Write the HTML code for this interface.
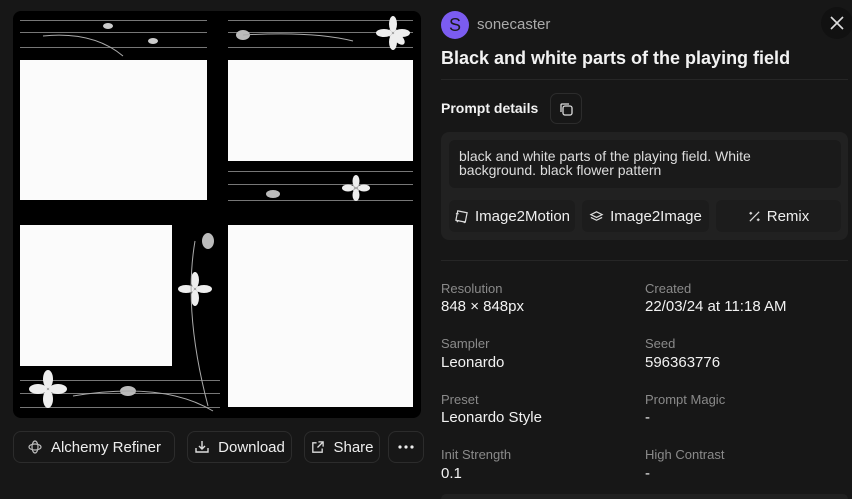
<!DOCTYPE html>
<html><head><meta charset="utf-8">
<style>
*{box-sizing:border-box;margin:0;padding:0}
html{width:852px;height:499px;overflow:hidden}
body{width:852px;height:499px;overflow:hidden;background:#171717;font-family:"Liberation Sans",sans-serif;color:#f2f2f2;position:relative}
.abs{position:absolute}
.img{left:13px;top:11px;width:408px;height:407px;background:#000;border-radius:8px;overflow:hidden}
.w{position:absolute;background:#fbfbfb}
.ln{position:absolute;height:1px;background:#777}
.btn{position:absolute;top:431px;height:32px;border:1px solid #2c2c2c;border-radius:8px;display:flex;align-items:center;justify-content:center;gap:8px;font-size:15px;color:#eee}
.lab{font-size:13px;color:#8a8a8a;position:absolute}
.val{font-size:15px;color:#f2f2f2;position:absolute}
.ab{position:absolute;top:200px;height:32px;background:#1c1c1c;border-radius:6px;display:flex;align-items:center;justify-content:center;gap:6px;font-size:15px;color:#eee}
</style></head><body>
<div class="abs img">
  <div class="ln" style="left:7px;top:9px;width:187px"></div>
  <div class="ln" style="left:7px;top:21px;width:187px"></div>
  <div class="ln" style="left:7px;top:36px;width:187px"></div>
  <div class="ln" style="left:215px;top:9px;width:185px"></div>
  <div class="ln" style="left:215px;top:21px;width:185px"></div>
  <div class="ln" style="left:215px;top:36px;width:185px"></div>
  <div class="ln" style="left:215px;top:160px;width:185px"></div>
  <div class="ln" style="left:215px;top:173px;width:185px"></div>
  <div class="ln" style="left:215px;top:189px;width:185px"></div>
  <div class="ln" style="left:7px;top:369px;width:200px"></div>
  <div class="ln" style="left:7px;top:382px;width:200px"></div>
  <div class="ln" style="left:7px;top:396px;width:200px"></div>
  <div class="w" style="left:7px;top:49px;width:187px;height:140px"></div>
  <div class="w" style="left:215px;top:49px;width:185px;height:101px"></div>
  <div class="w" style="left:7px;top:214px;width:152px;height:141px"></div>
  <div class="w" style="left:215px;top:214px;width:185px;height:182px"></div>
  <svg class="abs" style="left:0;top:0" width="408" height="407">
    <g fill="#eee">
      <g transform="translate(380,22)"><circle r="5" fill="#aaa"/><ellipse cx="0" cy="-9" rx="4" ry="8"/><ellipse cx="0" cy="9" rx="4" ry="8"/><ellipse cx="-9" cy="0" rx="8" ry="4"/><ellipse cx="9" cy="0" rx="8" ry="4"/><ellipse cx="6" cy="6" rx="4" ry="7" transform="rotate(-45 6 6)"/></g>
      <g transform="translate(343,177)"><circle r="4" fill="#aaa"/><ellipse cy="-7" rx="3.5" ry="6"/><ellipse cy="7" rx="3.5" ry="6"/><ellipse cx="-8" rx="6" ry="3.5"/><ellipse cx="8" rx="6" ry="3.5"/></g>
      <g transform="translate(182,278)"><circle r="4" fill="#aaa"/><ellipse cy="-9" rx="4" ry="8"/><ellipse cy="9" rx="4" ry="8"/><ellipse cx="-9" rx="8" ry="4"/><ellipse cx="9" rx="8" ry="4"/></g>
      <g transform="translate(35,378)"><circle r="4" fill="#aaa"/><ellipse cy="-10" rx="5" ry="9"/><ellipse cy="10" rx="5" ry="9"/><ellipse cx="-10" rx="9" ry="5"/><ellipse cx="10" rx="9" ry="5"/></g>
      <ellipse cx="230" cy="24" rx="7" ry="5" fill="#bbb"/>
      <ellipse cx="115" cy="380" rx="8" ry="5" fill="#bbb"/>
      <ellipse cx="260" cy="183" rx="7" ry="4" fill="#bbb"/>
      <ellipse cx="195" cy="230" rx="6" ry="8" fill="#bbb"/>
      <ellipse cx="140" cy="30" rx="5" ry="3" fill="#ccc"/>
      <ellipse cx="95" cy="15" rx="5" ry="3" fill="#ccc"/>
    </g>
    <g stroke="#aaa" fill="none" stroke-width="1">
      <path d="M30 25 Q80 20 110 45"/><path d="M230 24 Q300 20 340 30"/><path d="M182 230 Q170 300 195 395"/><path d="M60 385 Q150 370 200 400"/>
    </g>
  </svg>
</div>

<div class="btn" style="left:13px;width:162px"><svg width="16" height="16" viewBox="0 0 16 16" fill="none" stroke="#bbb" stroke-width="1.2"><ellipse cx="8" cy="8" rx="6" ry="3"/><ellipse cx="8" cy="8" rx="3" ry="6"/></svg>Alchemy Refiner</div>
<div class="btn" style="left:187px;width:105px"><svg width="16" height="16" viewBox="0 0 16 16" fill="none" stroke="#ddd" stroke-width="1.4"><path d="M8 2v8M5 7l3 3 3-3M2 9v4h12V9"/></svg>Download</div>
<div class="btn" style="left:304px;width:76px"><svg width="15" height="15" viewBox="0 0 16 16" fill="none" stroke="#ddd" stroke-width="1.4"><path d="M7 3H3v10h10V9M9 2h5v5M14 2L8 8"/></svg>Share</div>
<div class="btn" style="left:388px;width:36px"><svg width="16" height="4" viewBox="0 0 16 4" fill="#eee"><circle cx="2" cy="2" r="1.6"/><circle cx="8" cy="2" r="1.6"/><circle cx="14" cy="2" r="1.6"/></svg></div>

<div class="abs" style="left:441px;top:11px;width:28px;height:28px;border-radius:50%;background:#7b5cf0;color:#1a1a1a;font-size:18px;display:flex;align-items:center;justify-content:center">S</div>
<div class="abs" style="left:477px;top:16px;font-size:15px;color:#aaa">sonecaster</div>
<div class="abs" style="left:821px;top:7px;width:32px;height:32px;border-radius:50%;background:#111;display:flex;align-items:center;justify-content:center"><svg width="14" height="14" viewBox="0 0 14 14" stroke="#ddd" stroke-width="1.6"><path d="M1 1l12 12M13 1L1 13"/></svg></div>
<div class="abs" style="left:441px;top:48px;font-size:18px;font-weight:bold">Black and white parts of the playing field</div>
<div class="abs" style="left:441px;top:79px;width:407px;height:1px;background:#262626"></div>
<div class="abs" style="left:441px;top:100px;font-size:14px;font-weight:bold">Prompt details</div>
<div class="abs" style="left:550px;top:93px;width:32px;height:31px;border:1px solid #2c2c2c;border-radius:7px;display:flex;align-items:center;justify-content:center"><svg width="14" height="14" viewBox="0 0 14 14" fill="none" stroke="#ddd" stroke-width="1.3"><rect x="4" y="4" width="9" height="9" rx="2"/><path d="M2 10V3a1 1 0 0 1 1-1h7"/></svg></div>
<div class="abs" style="left:441px;top:132px;width:407px;height:108px;background:#212121;border-radius:8px"></div>
<div class="abs" style="left:449px;top:140px;width:392px;height:48px;background:#1a1a1a;border-radius:6px;padding:9px 10px;font-size:14px;line-height:14px;color:#ddd">black and white parts of the playing field. White background. black flower pattern</div>
<div class="ab" style="left:449px;width:126px"><svg width="15" height="15" viewBox="0 0 16 16" fill="none" stroke="#ddd" stroke-width="1.3"><path d="M4 2l10 2-2 10-10-2z"/><path d="M2 5h3M11 13v2M3 14l2-2"/></svg>Image2Motion</div>
<div class="ab" style="left:582px;width:127px"><svg width="15" height="15" viewBox="0 0 16 16" fill="none" stroke="#ddd" stroke-width="1.3"><path d="M8 3l6 3-6 3-6-3z"/><path d="M2 9l6 3 6-3"/></svg>Image2Image</div>
<div class="ab" style="left:716px;width:125px"><svg width="13" height="13" viewBox="0 0 14 14" fill="none" stroke="#ddd" stroke-width="1.3"><path d="M2 12L12 2M3 2v3M1.5 3.5h3M11 9v3M9.5 10.5h3"/></svg>Remix</div>
<div class="abs" style="left:441px;top:260px;width:407px;height:1px;background:#262626"></div>

<div class="lab" style="left:441px;top:281px">Resolution</div><div class="val" style="left:441px;top:298px">848 × 848px</div>
<div class="lab" style="left:645px;top:281px">Created</div><div class="val" style="left:645px;top:298px">22/03/24 at 11:18 AM</div>
<div class="lab" style="left:441px;top:336px">Sampler</div><div class="val" style="left:441px;top:354px">Leonardo</div>
<div class="lab" style="left:645px;top:336px">Seed</div><div class="val" style="left:645px;top:354px">596363776</div>
<div class="lab" style="left:441px;top:392px">Preset</div><div class="val" style="left:441px;top:409px">Leonardo Style</div>
<div class="lab" style="left:645px;top:392px">Prompt Magic</div><div class="val" style="left:645px;top:409px">-</div>
<div class="lab" style="left:441px;top:447px">Init Strength</div><div class="val" style="left:441px;top:465px">0.1</div>
<div class="lab" style="left:645px;top:447px">High Contrast</div><div class="val" style="left:645px;top:465px">-</div>
<div class="abs" style="left:441px;top:494px;width:407px;height:5px;background:#202020;border-radius:8px 8px 0 0"></div>
</body></html>
